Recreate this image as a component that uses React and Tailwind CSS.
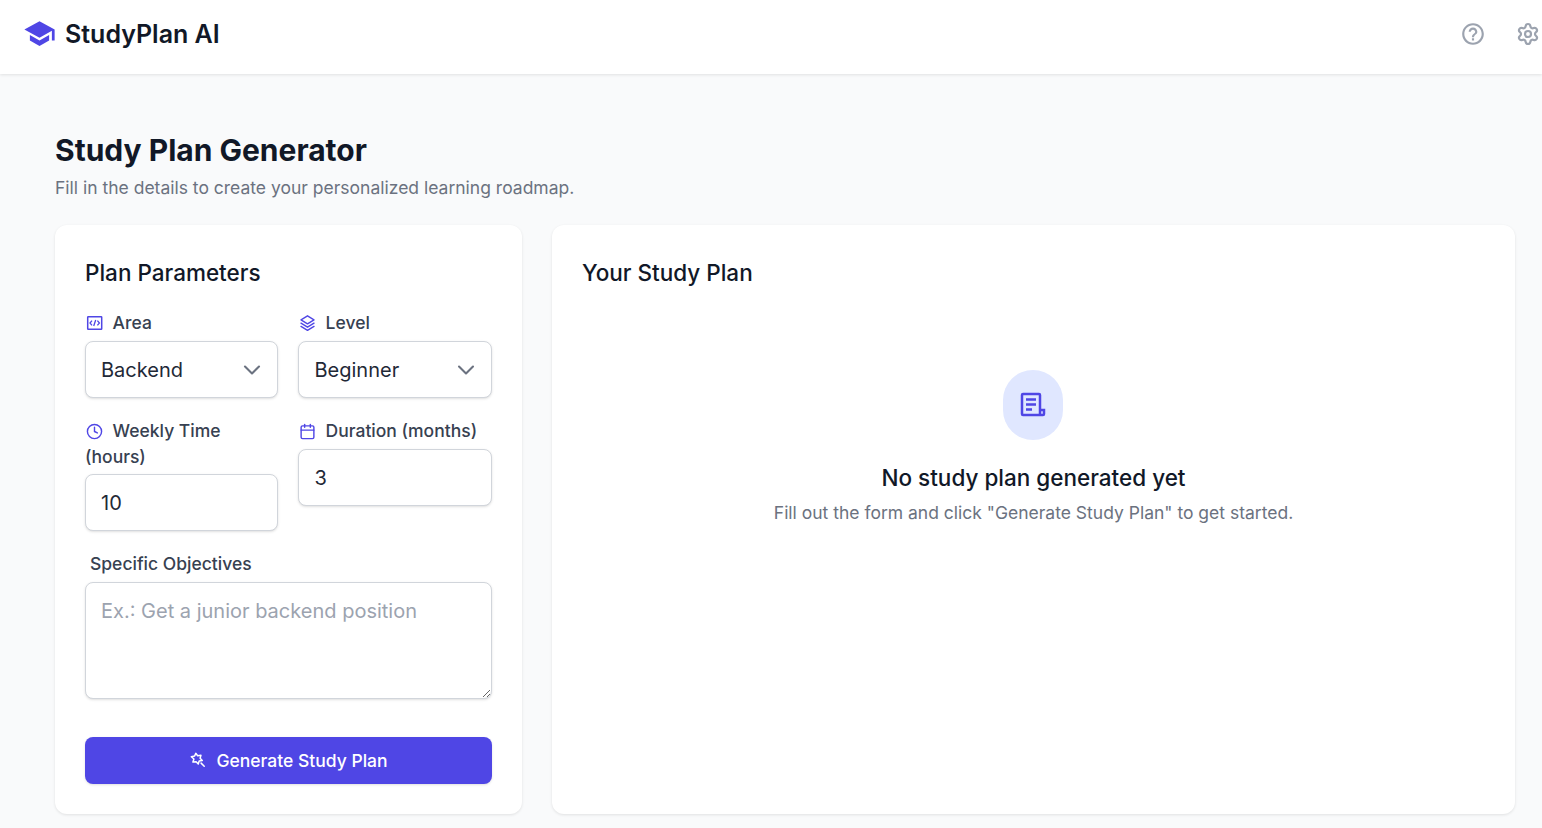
import React from "react";
import { ChevronDown, Clock, Calendar, Settings } from "lucide-react";

const labelCls = "block text-[17.5px] leading-[25.5px] font-medium text-[#374151]";
const fieldCls = "w-full h-[57px] rounded-lg border border-[#d1d5db] bg-white text-[20px] text-[#1f2937] shadow-sm outline-none";

function CodeBox() {
  return (
    <svg viewBox="0 0 18 18" className="inline-block w-[18px] h-[18px] mr-[9.6px] align-[-3px] text-[#4f46e5]" fill="none" stroke="currentColor">
      <rect x="2.7" y="2.7" width="14" height="12.6" rx="0.5" strokeWidth="1.5" />
      <path d="M7 6.6 5 9l2 2.4M12.4 6.6l2 2.4-2 2.4M10.7 6 8.7 12" strokeWidth="1.3" />
    </svg>
  );
}

function LayersIcon() {
  return (
    <svg viewBox="0 0 18 18" className="inline-block w-[18px] h-[18px] mr-[9.6px] align-[-3px] text-[#4f46e5]" fill="none" stroke="currentColor" strokeWidth="1.4" strokeLinejoin="round" strokeLinecap="round">
      <path d="M9.5 1.8 16 5.8 9.5 9.8 3 5.8z" />
      <path d="M3 9.2 9.5 13.2 16 9.2" />
      <path d="M3 12.4 9.5 16.4 16 12.4" />
    </svg>
  );
}

function Field({ label, icon, value, pad = "pl-[15px] pr-[15px]", textY = "" }) {
  return (
    <div>
      <label className={labelCls}>
        {icon}
        {label}
      </label>
      <input readOnly type="text" value={value} className={`${fieldCls} ${pad} ${textY} mt-[5px]`} />
    </div>
  );
}

function SelectField({ label, icon, value, options, pad = "pl-[15px] pr-[15px]" }) {
  return (
    <div>
      <label className={labelCls}>
        {icon}
        {label}
      </label>
      <div className="relative mt-[5.5px]">
        <select defaultValue={value} className={`${fieldCls} ${pad} appearance-none`}>
          {options.map((o) => (
            <option key={o}>{o}</option>
          ))}
        </select>
        <ChevronDown className="absolute right-[12px] top-[15px] w-[28px] h-[28px] text-[#6b7280] pointer-events-none" strokeWidth={1.8} />
      </div>
    </div>
  );
}

const inlineIcon = "inline-block w-[17px] h-[17px] ml-[1px] mr-[9.6px] align-[-3px] text-[#4f46e5]";

export default function App() {
  return (
    <div className="h-[828px] overflow-hidden bg-[#f9fafb] text-[#111827] font-['Inter','Noto_Sans',sans-serif]">
      <header className="h-[74px] bg-white shadow-[0_1px_3px_rgba(0,0,0,0.1)] flex items-center justify-between pl-[24px] pr-[2px] pb-[6px] relative">
        <div className="flex items-center">
          <svg viewBox="0 0 24 24" className="w-[33px] h-[33px] -ml-[1px] -mt-[1px] text-[#4f46e5]" fill="currentColor">
            <path d="M5 13.18v4L12 21l7-3.82v-4L12 17l-7-3.82zM12 3 1 9l11 6 9-4.91V17h2V9L12 3z" />
          </svg>
          <span className="ml-[9px] text-[25px] font-semibold leading-8 text-[#111827]">StudyPlan AI</span>
        </div>
        <div className="flex items-center gap-[30px] text-[#9ca3af]">
          <svg viewBox="0 0 24 24" className="w-[26px] h-[26px]" fill="currentColor">
            <path d="M11 18h2v-2h-2v2zm1-16C6.48 2 2 6.48 2 12s4.48 10 10 10 10-4.48 10-10S17.52 2 12 2zm0 18c-4.41 0-8-3.59-8-8s3.59-8 8-8 8 3.59 8 8-3.59 8-8 8zm0-14c-2.21 0-4 1.79-4 4h2c0-1.1.9-2 2-2s2 .9 2 2c0 2-3 1.75-3 5h2c0-2.25 3-2.5 3-5 0-2.21-1.79-4-4-4z" />
          </svg>
          <Settings className="w-[24px] h-[24px]" strokeWidth={2.2} />
        </div>
      </header>

      <main className="pl-[55px] pr-[27px] pt-[56px]">
        <h1 className="text-[30px] leading-[40px] font-bold text-[#111827]">Study Plan Generator</h1>
        <p className="mt-[4px] text-[17.5px] leading-[28px] text-[#6b7280]">Fill in the details to create your personalized learning roadmap.</p>

        <div className="mt-[23px] flex gap-[30px]">
          <section className="w-[467px] h-[589px] shrink-0 rounded-xl bg-white shadow-[0_1px_3px_rgba(0,0,0,0.1)] px-[30px] pt-[32px]">
            <h2 className="text-[22.5px] leading-[32px] font-medium text-[#111827]">Plan Parameters</h2>
            <div className="mt-[21px] grid grid-cols-[193px_194px] gap-x-[20px] gap-y-[20px] items-start">
              <SelectField label="Area" value="Backend" options={["Backend", "Frontend", "Fullstack"]} icon={<CodeBox />} />
              <SelectField label="Level" value="Beginner" pad="pl-[15.5px] pr-[15px]" options={["Beginner", "Intermediate", "Advanced"]} icon={<LayersIcon />} />
              <Field label="Weekly Time (hours)" value="10" icon={<Clock className={inlineIcon} strokeWidth={2} />} />
              <Field label="Duration (months)" value="3" pad="pl-[15.5px] pr-[15px]" textY="pt-[1px]" icon={<Calendar className={inlineIcon} strokeWidth={2} />} />
            </div>
            <label className={`${labelCls} mt-[20px] pl-[5px]`}>Specific Objectives</label>
            <textarea
              readOnly
              placeholder="Ex.: Get a junior backend position"
              className="mt-[5px] block w-full h-[117px] rounded-lg border border-[#d1d5db] bg-white px-[15px] py-[14px] text-[20px] leading-[28px] text-[#1f2937] placeholder:text-[#9ca3af] shadow-sm outline-none resize-y"
            />
            <button className="mt-[38px] w-full h-[47px] rounded-lg bg-[#4f46e5] text-white text-[17.5px] font-medium flex items-center justify-center shadow-sm pt-[2px] pl-[1px]">
              <svg viewBox="0 0 18 18" className="w-[16px] h-[16px] mr-[10px] -mt-[3px]" fill="none" stroke="currentColor" strokeWidth="1.7" strokeLinejoin="round">
                <path d="M6.5 1.5 8.6 4.2l3.7-.6-.9 3.5 2.4 2.5-3.5.6-1 3.2-2.4-2.5-3.6.4 1.1-3.4L1.5 5.3l3.7-.8z" />
                <path d="m12.5 12.5 3.5 3.5" strokeLinecap="round" />
              </svg>
              Generate Study Plan
            </button>
          </section>

          <section className="flex-1 h-[589px] rounded-xl bg-white shadow-[0_1px_3px_rgba(0,0,0,0.1)] px-[30px] pt-[32px] flex flex-col">
            <h2 className="text-[22.5px] leading-[32px] font-medium text-[#111827]">Your Study Plan</h2>
            <div className="mt-[81px] flex flex-col items-center">
              <div className="w-[60px] h-[70px] mr-[1px] rounded-full bg-[#e0e7ff] flex items-center justify-center">
                <svg viewBox="0 0 26 26" className="w-[26px] h-[26px] text-[#4f46e5]" fill="none" stroke="currentColor" strokeWidth="2.5">
                  <path d="M20 18V3a1 1 0 0 0-1-1H3a1 1 0 0 0-1 1v19a1 1 0 0 0 1 1h20a1 1 0 0 0 1-1v-4h-4v5" />
                  <path d="M6 7.5h10M6 12.5h10M6 17.5h6" />
                </svg>
              </div>
              <h3 className="mt-[22px] text-[22.5px] leading-[32px] font-medium text-[#111827]">No study plan generated yet</h3>
              <p className="mt-[5px] text-[17.5px] leading-[28px] text-[#6b7280]">Fill out the form and click "Generate Study Plan" to get started.</p>
            </div>
          </section>
        </div>
      </main>
    </div>
  );
}
